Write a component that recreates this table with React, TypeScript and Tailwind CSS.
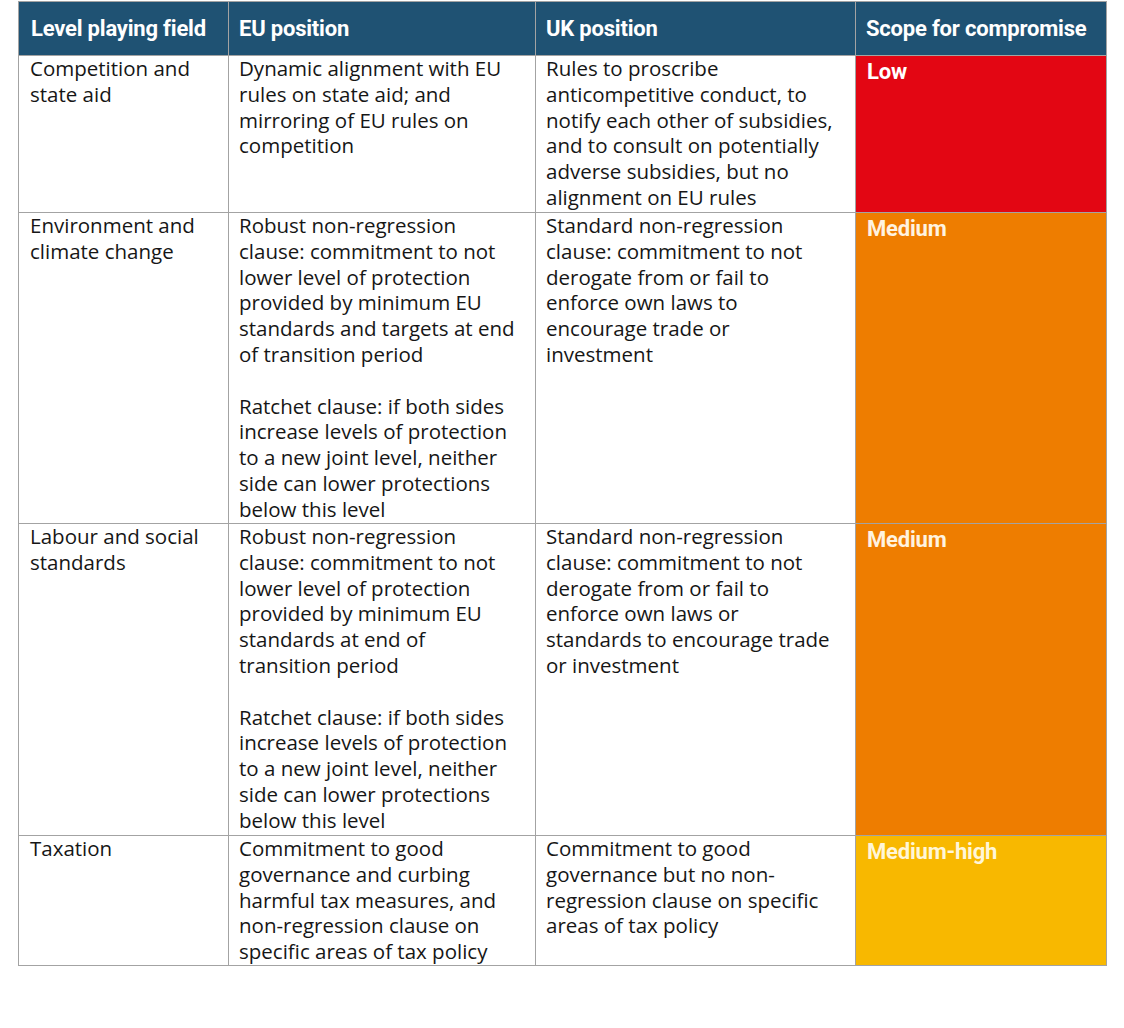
const rows: {
  topic: string[];
  eu: string[];
  uk: string[];
  scope: string;
  tone: string;
  label: string;
}[] = [
  {
    topic: ["Competition and", "state aid"],
    eu: ["Dynamic alignment with EU", "rules on state aid; and", "mirroring of EU rules on", "competition"],
    uk: [
      "Rules to proscribe",
      "anticompetitive conduct, to",
      "notify each other of subsidies,",
      "and to consult on potentially",
      "adverse subsidies, but no",
      "alignment on EU rules",
    ],
    scope: "Low",
    tone: "bg-[#e30613]",
    label: "text-white",
  },
  {
    topic: ["Environment and", "climate change"],
    eu: [
      "Robust non-regression",
      "clause: commitment to not",
      "lower level of protection",
      "provided by minimum EU",
      "standards and targets at end",
      "of transition period",
      "",
      "Ratchet clause: if both sides",
      "increase levels of protection",
      "to a new joint level, neither",
      "side can lower protections",
      "below this level",
    ],
    uk: [
      "Standard non-regression",
      "clause: commitment to not",
      "derogate from or fail to",
      "enforce own laws to",
      "encourage trade or",
      "investment",
    ],
    scope: "Medium",
    tone: "bg-[#ee7d00]",
    label: "text-[#fff3e0]",
  },
  {
    topic: ["Labour and social", "standards"],
    eu: [
      "Robust non-regression",
      "clause: commitment to not",
      "lower level of protection",
      "provided by minimum EU",
      "standards at end of",
      "transition period",
      "",
      "Ratchet clause: if both sides",
      "increase levels of protection",
      "to a new joint level, neither",
      "side can lower protections",
      "below this level",
    ],
    uk: [
      "Standard non-regression",
      "clause: commitment to not",
      "derogate from or fail to",
      "enforce own laws or",
      "standards to encourage trade",
      "or investment",
    ],
    scope: "Medium",
    tone: "bg-[#ee7d00]",
    label: "text-[#fff3e0]",
  },
  {
    topic: ["Taxation"],
    eu: [
      "Commitment to good",
      "governance and curbing",
      "harmful tax measures, and",
      "non-regression clause on",
      "specific areas of tax policy",
    ],
    uk: [
      "Commitment to good",
      "governance but no non-",
      "regression clause on specific",
      "areas of tax policy",
    ],
    scope: "Medium-high",
    tone: "bg-[#f8b800]",
    label: "text-[#fff6d8]",
  },
];

const headers = ["Level playing field", "EU position", "UK position", "Scope for compromise"];

function Lines({ lines }: { lines: string[] }) {
  return (
    <>
      {lines.map((line, i) => (
        <div key={i} className="whitespace-nowrap h-[25.8px] leading-[25.8px]">
          {line}
        </div>
      ))}
    </>
  );
}

export default function App() {
  return (
    <div className="w-[1124px] h-[1028px] bg-white pt-px pl-[18px]">
      <div
        className="w-fit grid grid-cols-[210px_307px_320px_251px] grid-rows-[54px_157px_311px_312px_130px] border-l border-t border-[#a3a3a3] text-[20.5px] text-[#161616]"
        style={{ fontFamily: '"Open Sans", "Noto Sans", sans-serif' }}
      >
        {headers.map((h, i) => (
          <div
            key={h}
            className={`bg-[#1f5273] flex items-center border-r border-b border-[#a3a3a3] text-white font-bold text-[22px] tracking-[-0.2px] ${
              i === 0 ? "pl-[12px]" : "pl-[10px]"
            }`}
            style={{ fontFamily: "Roboto, sans-serif" }}
          >
            {h}
          </div>
        ))}
        {rows.map((r, idx) => (
          <div key={idx} className="contents">
            <div className="border-r border-b border-[#a3a3a3] pl-[11px]">
              <Lines lines={r.topic} />
            </div>
            <div className="border-r border-b border-[#a3a3a3] pl-[10px]">
              <Lines lines={r.eu} />
            </div>
            <div className="border-r border-b border-[#a3a3a3] pl-[10px]">
              <Lines lines={r.uk} />
            </div>
            <div className={`${r.tone} border-r border-b border-[#a3a3a3] pl-[11px] pt-[3px]`}>
              <div
                className={`${r.label} font-bold text-[22px] tracking-[-0.2px] leading-[26px]`}
                style={{ fontFamily: "Roboto, sans-serif" }}
              >
                {r.scope}
              </div>
            </div>
          </div>
        ))}
      </div>
    </div>
  );
}
